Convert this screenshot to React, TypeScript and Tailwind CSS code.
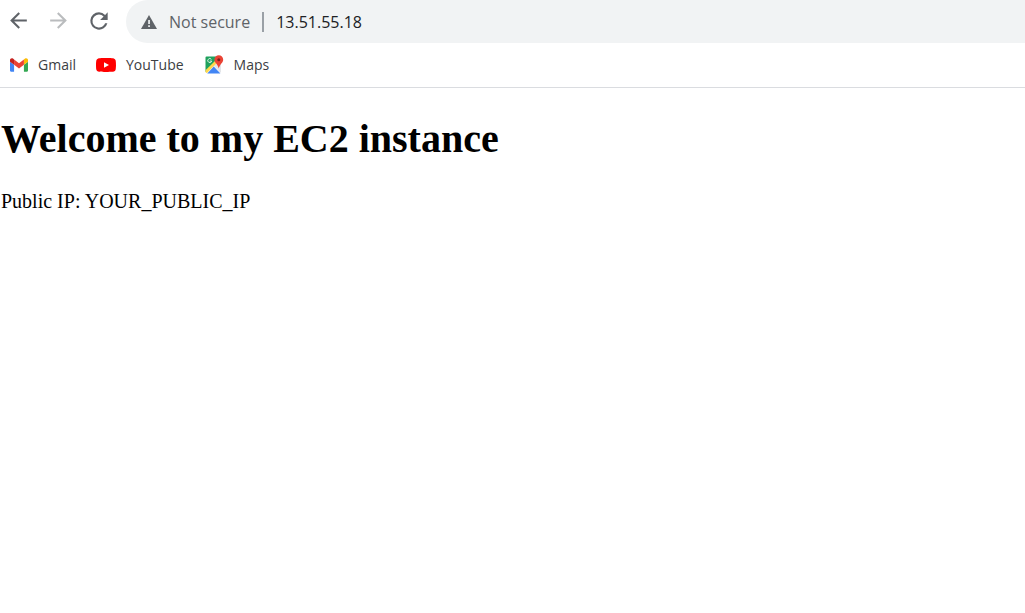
function ArrowIcon({ className }: { className?: string }) {
  return (
    <svg viewBox="0 0 24 24" fill="currentColor" className={className} aria-hidden="true">
      <path d="M20 11H7.83l5.59-5.59L12 4l-8 8 8 8 1.41-1.41L7.83 13H20v-2z" />
    </svg>
  );
}

function ReloadIcon() {
  return (
    <svg viewBox="0 0 24 24" fill="currentColor" className="size-[26px]" aria-hidden="true">
      <path d="M17.65 6.35A7.958 7.958 0 0 0 12 4a8 8 0 1 0 7.73 10h-2.08A6 6 0 1 1 12 6c1.66 0 3.14.69 4.22 1.78L13 11h7V4l-2.35 2.35z" />
    </svg>
  );
}

function WarningIcon() {
  return (
    <svg viewBox="0 0 16 14" className="h-[14px] w-4" aria-hidden="true">
      <path d="M8 0l8 14H0z" fill="#5f6368" />
      <path d="M7.2 5h1.7v4H7.2zM7.2 10.2h1.7v1.7H7.2z" fill="#f1f3f4" />
    </svg>
  );
}

function GmailIcon() {
  return (
    <svg viewBox="52 42 88 66" className="h-[14px] w-[18px]" aria-hidden="true">
      <path fill="#4285f4" d="M58 108h14V74L52 59v43c0 3.32 2.69 6 6 6" />
      <path fill="#34a853" d="M120 108h14c3.32 0 6-2.69 6-6V59l-20 15" />
      <path fill="#fbbc04" d="M120 48v26l20-15v-8c0-7.42-8.47-11.65-14.4-7.2" />
      <path fill="#ea4335" d="M72 74V48l24 18 24-18v26L96 92" />
      <path fill="#c5221f" d="M52 51v8l20 15V48l-5.6-4.2c-5.94-4.45-14.4-.22-14.4 7.2" />
    </svg>
  );
}

function YouTubeIcon() {
  return (
    <svg viewBox="0 0 20 14" className="h-[14px] w-5" aria-hidden="true">
      <path
        fill="#f00"
        d="M19.6 2.2A2.5 2.5 0 0 0 17.8.4C16.3 0 10 0 10 0S3.7 0 2.2.4A2.5 2.5 0 0 0 .4 2.2C0 3.7 0 7 0 7s0 3.3.4 4.8a2.5 2.5 0 0 0 1.8 1.8C3.7 14 10 14 10 14s6.3 0 7.8-.4a2.5 2.5 0 0 0 1.8-1.8C20 10.3 20 7 20 7s0-3.3-.4-4.8z"
      />
      <path fill="#fff" d="M8 4.2v5.6L13 7z" />
    </svg>
  );
}

function MapsIcon() {
  return (
    <svg viewBox="0 0 20 20" className="size-5" aria-hidden="true">
      <path fill="#1fa15d" d="M2.5 1.5H15V5L1.5 17V2.5a1 1 0 0 1 1-1z" />
      <path fill="#e3e5e8" d="M9.5 10.5L17 4v12.5a1.5 1.5 0 0 1-.6 1.3z" />
      <path fill="#ffd84d" d="M1.5 15.2L13 4l1.5 2.2L3 18a1.5 1.5 0 0 1-1.5-1.5z" />
      <path fill="#4285f4" d="M3.2 18.5l6.6-7 6.6 7z" />
      <path fill="none" stroke="#d9f2e4" d="M7.4 4.4a2 2 0 1 0 .3 1.7H5.8" />
      <path
        fill="#ea4335"
        d="M14.8.3a4.4 4.4 0 0 0-4.4 4.4c0 3.1 3.4 4.3 4.4 8.8 1-4.5 4.4-5.7 4.4-8.8A4.4 4.4 0 0 0 14.8.3z"
      />
      <circle cx="14.8" cy="4.7" r="1.5" fill="#7d211b" />
    </svg>
  );
}

const bookmarks = [
  { label: "Gmail", href: "#gmail", icon: <GmailIcon /> },
  { label: "YouTube", href: "#youtube", icon: <YouTubeIcon /> },
  { label: "Maps", href: "#maps", icon: <MapsIcon /> },
];

export default function App() {
  return (
    <div className="min-h-screen bg-white">
      <header className="border-b border-[#dadce0] font-['Open_Sans','Noto_Sans',sans-serif]">
        <div className="flex h-[43px] items-center text-[#5f6368]">
          <nav aria-label="History" className="flex shrink-0 items-center gap-[15px] pb-0.5 pl-1.5">
            <button type="button" aria-label="Back">
              <ArrowIcon className="size-[25px]" />
            </button>
            <button type="button" aria-label="Forward" disabled className="text-[#babcbe]">
              <ArrowIcon className="size-[25px] rotate-180" />
            </button>
            <button type="button" aria-label="Reload">
              <ReloadIcon />
            </button>
          </nav>
          <div className="ml-[14px] flex h-full min-w-0 grow items-center rounded-l-full bg-[#f1f3f4] pl-[15px]">
            <button type="button" className="flex shrink-0 items-center gap-3 text-base">
              <WarningIcon />
              Not secure
            </button>
            <span className="mx-3 h-5 w-0.5 shrink-0 bg-[#9aa0a6]" />
            <input
              type="text"
              aria-label="Address"
              defaultValue="13.51.55.18"
              className="min-w-0 grow bg-transparent text-base text-[#202124] outline-none"
            />
          </div>
        </div>
        <nav aria-label="Bookmarks" className="flex h-11 items-center gap-5 pl-2.5 text-sm text-[#3c4043]">
          {bookmarks.map(({ label, href, icon }) => (
            <a key={label} href={href} className="flex items-center gap-2.5">
              {icon}
              {label}
            </a>
          ))}
        </nav>
      </header>
      <main className="px-px pt-7 font-['Liberation_Serif',serif] text-black">
        <h1 className="text-[40px] leading-[46px] font-bold">Welcome to my EC2 instance</h1>
        <p className="mt-[27px] text-xl leading-6">Public IP: YOUR_PUBLIC_IP</p>
      </main>
    </div>
  );
}
